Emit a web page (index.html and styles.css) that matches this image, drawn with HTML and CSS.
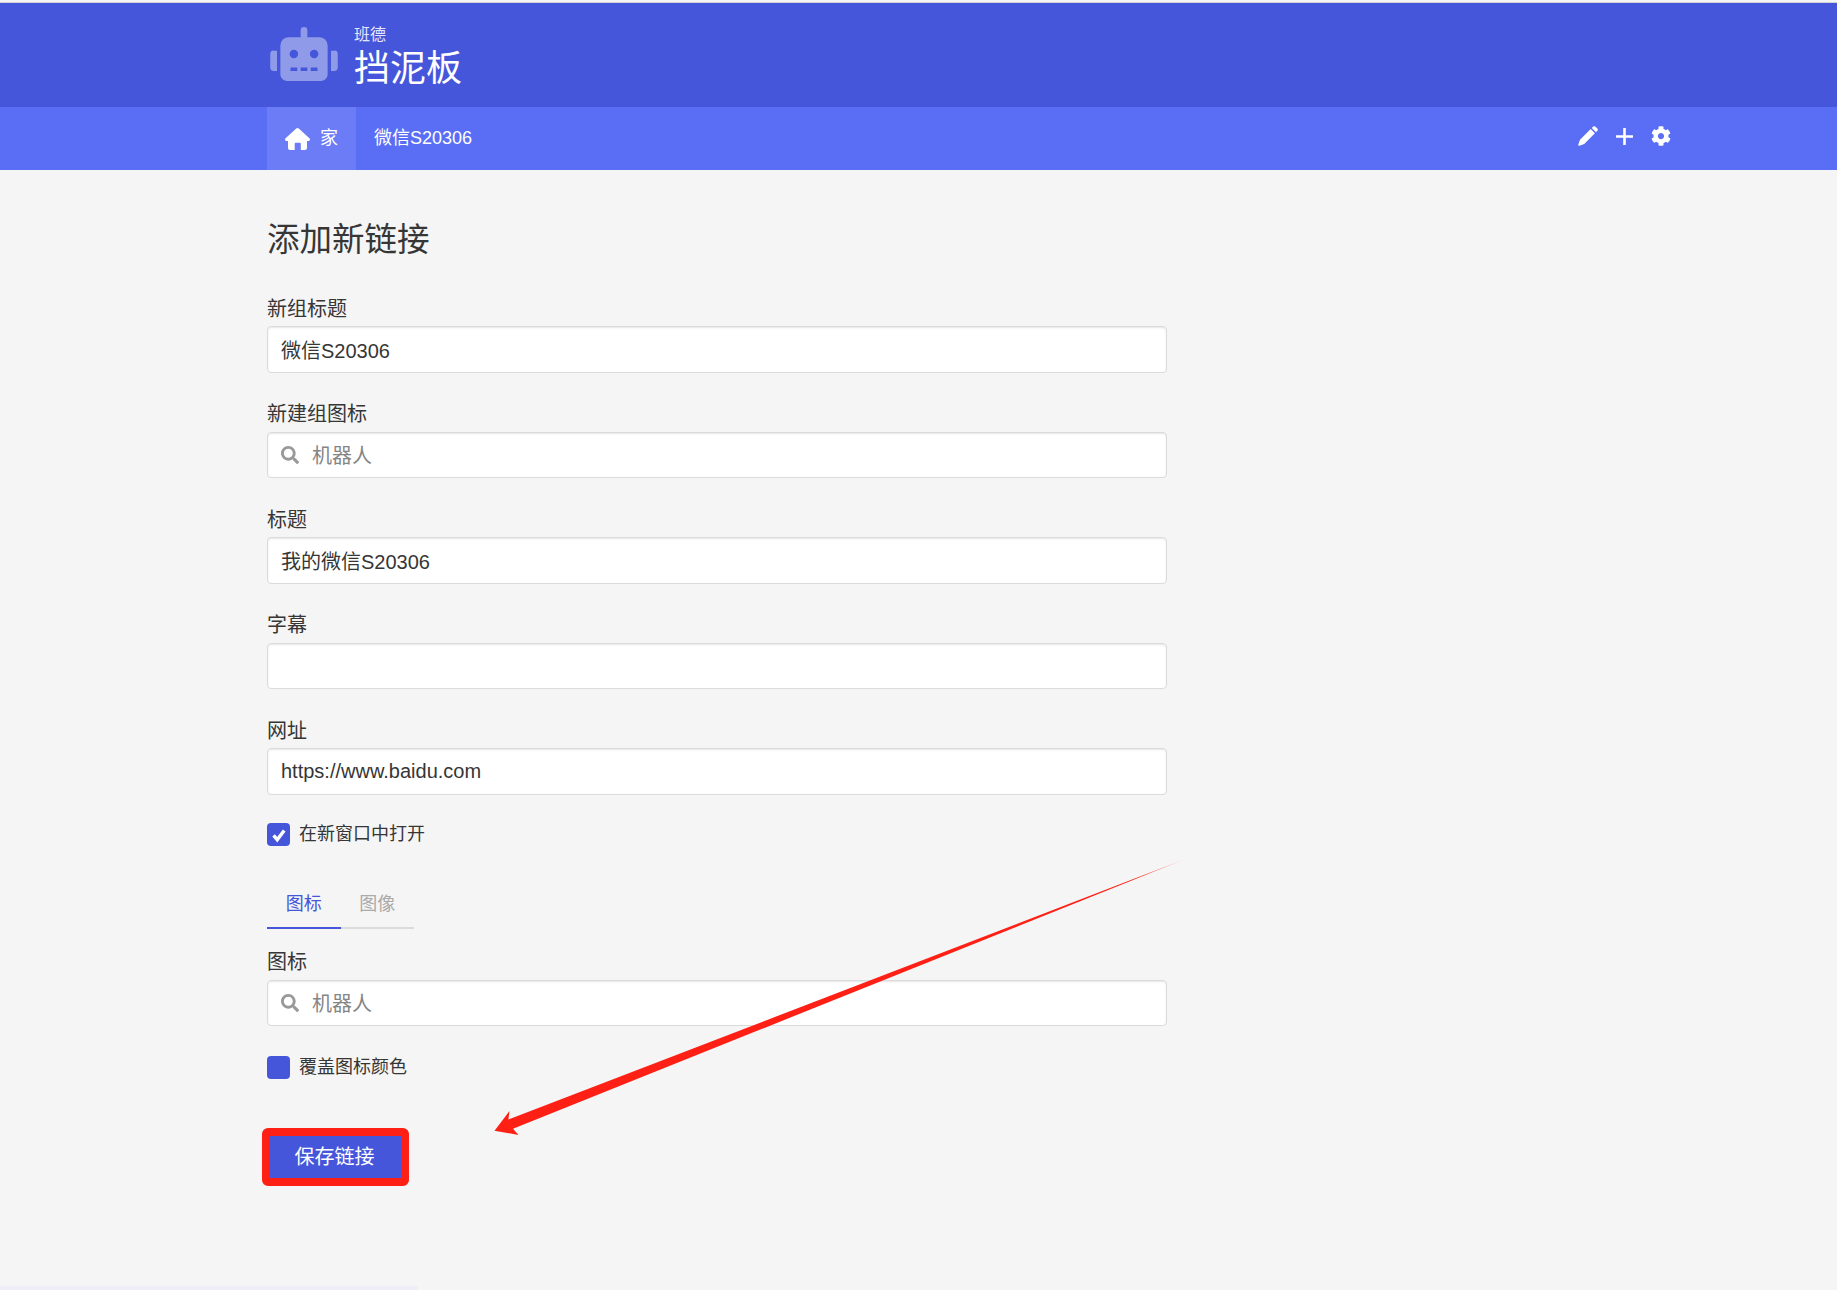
FILE: index.html
```html
<!DOCTYPE html>
<html lang="zh-CN">
<head>
<meta charset="utf-8">
<title>挡泥板</title>
<link rel="stylesheet" href="styles.css">
</head>
<body>
<header class="banner">
  <svg class="robot" viewBox="0 0 640 512"><path d="M32,224H64V416H32A31.96166,31.96166,0,0,1,0,384V256A31.96166,31.96166,0,0,1,32,224Zm512-48V448a64.06328,64.06328,0,0,1-64,64H160a64.06328,64.06328,0,0,1-64-64V176a79.974,79.974,0,0,1,80-80H288V32a32,32,0,0,1,64,0V96H464A79.974,79.974,0,0,1,544,176ZM264,256a40,40,0,1,0-40,40A39.997,39.997,0,0,0,264,256Zm-8,128H192v32h64Zm96,0H288v32h64ZM456,256a40,40,0,1,0-40,40A39.997,39.997,0,0,0,456,256Zm-8,128H384v32h64ZM640,256V384a31.96166,31.96166,0,0,1-32,32H576V224h32A31.96166,31.96166,0,0,1,640,256Z"/></svg>
  <div class="brand">
    <div class="brand-sub">班德</div>
    <div class="brand-title">挡泥板</div>
  </div>
</header>
<nav class="navbar">
  <div class="nav-links">
    <a class="nav-item nav-home">
      <svg class="home-icon" viewBox="0 0 25 22"><path d="M12.5 0Q13.2 0 13.8.5L24.4 10.3Q25.4 11.4 24.6 12.4 24 13 23 13H22V20Q22 22 20 22H15.8V15.7Q15.8 14.7 14.8 14.7H10.7Q9.7 14.7 9.7 15.7V22H5Q3 22 3 20V13H2Q1 13 .4 12.4-.4 11.4.6 10.3L11.2.5Q11.8 0 12.5 0Z"/></svg>
      <span>家</span>
    </a>
    <a class="nav-item">微信S20306</a>
  </div>
  <div class="nav-tools">
    <svg class="tool" viewBox="0 0 20 20"><path d="M.3 18.6L2 13.8 12.7 3.1 16.9 7.3 6.2 18 1.4 19.7Q.1 19.9.3 18.6ZM13.8 2L15.2.6Q16-.1 17.2.4L19.6 2.8Q20.1 4 19.4 4.8L18 6.2Z"/></svg>
    <svg class="tool tool-plus" viewBox="0 0 17 17"><path d="M7.2 0h2.6v7.2H17v2.6H9.8V17H7.2V9.8H0V7.2h7.2z"/></svg>
    <svg class="tool" viewBox="0 0 512 512"><path d="M487.4 315.7l-42.6-24.6c4.3-23.2 4.3-47 0-70.2l42.6-24.6c4.9-2.8 7.1-8.6 5.5-14-11.1-35.6-30-67.8-54.7-94.6-3.8-4.1-10-5.1-14.8-2.3L380.8 110c-17.9-15.4-38.5-27.3-60.8-35.1V25.8c0-5.6-3.9-10.5-9.4-11.7-36.7-8.2-74.3-7.8-109.2 0-5.5 1.2-9.4 6.1-9.4 11.7V75c-22.2 7.9-42.8 19.8-60.8 35.1L88.7 85.5c-4.9-2.8-11-1.9-14.8 2.3-24.7 26.7-43.6 58.9-54.7 94.6-1.7 5.4.6 11.2 5.5 14L67.3 221c-4.3 23.2-4.3 47 0 70.2l-42.6 24.6c-4.9 2.8-7.1 8.6-5.5 14 11.1 35.6 30 67.8 54.7 94.6 3.8 4.1 10 5.1 14.8 2.3l42.6-24.6c17.9 15.4 38.5 27.3 60.8 35.1v49.2c0 5.6 3.9 10.5 9.4 11.7 36.7 8.2 74.3 7.8 109.2 0 5.5-1.2 9.4-6.1 9.4-11.7v-49.2c22.2-7.9 42.8-19.8 60.8-35.1l42.6 24.6c4.9 2.8 11 1.9 14.8-2.3 24.7-26.7 43.6-58.9 54.7-94.6 1.5-5.5-.7-11.3-5.6-14.1zM256 336c-44.1 0-80-35.9-80-80s35.9-80 80-80 80 35.9 80 80-35.9 80-80 80z"/></svg>
  </div>
</nav>
<main class="content">
  <h1 class="page-title">添加新链接</h1>
  <div class="field">
    <div class="label">新组标题</div>
    <div class="input">微信S20306</div>
  </div>
  <div class="field">
    <div class="label">新建组图标</div>
    <div class="input input-search">
      <svg class="search-icon" viewBox="0 0 512 512"><path d="M505 442.7L405.3 343c-4.5-4.5-10.6-7-17-7H372c27.6-35.3 44-79.7 44-128C416 93.1 322.9 0 208 0S0 93.1 0 208s93.1 208 208 208c48.3 0 92.7-16.4 128-44v16.3c0 6.4 2.5 12.5 7 17l99.7 99.7c9.4 9.4 24.6 9.4 33.9 0l28.3-28.3c9.4-9.4 9.4-24.6.1-34zM208 336c-70.7 0-128-57.2-128-128 0-70.7 57.2-128 128-128 70.7 0 128 57.2 128 128 0 70.7-57.2 128-128 128z"/></svg>
      <span>机器人</span>
    </div>
  </div>
  <div class="field">
    <div class="label">标题</div>
    <div class="input">我的微信S20306</div>
  </div>
  <div class="field">
    <div class="label">字幕</div>
    <div class="input"></div>
  </div>
  <div class="field">
    <div class="label">网址</div>
    <div class="input">https://www.baidu.com</div>
  </div>
  <div class="check check-tabs">
    <span class="box">
      <svg class="tick" viewBox="0 0 16 16"><path d="M2.6 8.4l3.6 4.3 7-9.2"/></svg>
    </span>
    <span>在新窗口中打开</span>
  </div>
  <div class="tabs">
    <a class="tab tab-active">图标</a>
    <a class="tab">图像</a>
  </div>
  <div class="field field-icon">
    <div class="label">图标</div>
    <div class="input input-search">
      <svg class="search-icon" viewBox="0 0 512 512"><path d="M505 442.7L405.3 343c-4.5-4.5-10.6-7-17-7H372c27.6-35.3 44-79.7 44-128C416 93.1 322.9 0 208 0S0 93.1 0 208s93.1 208 208 208c48.3 0 92.7-16.4 128-44v16.3c0 6.4 2.5 12.5 7 17l99.7 99.7c9.4 9.4 24.6 9.4 33.9 0l28.3-28.3c9.4-9.4 9.4-24.6.1-34zM208 336c-70.7 0-128-57.2-128-128 0-70.7 57.2-128 128-128 70.7 0 128 57.2 128 128 0 70.7-57.2 128-128 128z"/></svg>
      <span>机器人</span>
    </div>
  </div>
  <div class="check check-save">
    <span class="box"></span>
    <span>覆盖图标颜色</span>
  </div>
  <div class="save-mark">
    <button class="save" type="button">保存链接</button>
  </div>
</main>
<svg class="annotation" viewBox="0 0 1837 1290">
  <defs>
    <linearGradient id="fade" gradientUnits="userSpaceOnUse" x1="494" y1="1131" x2="1186" y2="859">
      <stop offset="0" stop-color="#ff2015"/>
      <stop offset="0.93" stop-color="#ff2015"/>
      <stop offset="1" stop-color="#ff2015" stop-opacity="0.3"/>
    </linearGradient>
  </defs>
  <polygon fill="url(#fade)" points="494.5,1130.7 509.5,1111 508.4,1119.5 1186,858.8 513,1128.8 518.5,1135"/>
</svg>
<div class="bottom-strip"></div>
</body>
</html>
```
FILE: styles.css
```css
* { box-sizing: border-box; }
html, body { margin: 0; height: 1290px; overflow: hidden; }
body {
  position: relative;
  padding-top: 2px;
  background: #f5f5f5;
  color: #363636;
  font-family: "Liberation Sans", "Noto Sans CJK SC", sans-serif;
}
.banner {
  display: flex;
  align-items: center;
  gap: 16px;
  height: 105px;
  padding: 0 0 0 270px;
  border-top: 1px solid #d4d4d4;
  background: #4656db;
}
.robot { width: 68px; height: 54px; margin-top: -3px; fill: #8f9ae9; }
.brand { margin-top: 6px; color: #fff; }
.brand-sub { font-size: 16px; line-height: 20px; color: #e4e7fa; }
.brand-title { font-size: 36px; line-height: 47px; }
.navbar {
  display: flex;
  justify-content: space-between;
  align-items: stretch;
  height: 63px;
  padding: 0 166px 0 267px;
  background: #5a6ef5;
  color: #fff;
}
.nav-links { display: flex; }
.nav-item {
  display: flex;
  align-items: center;
  gap: 10px;
  padding: 0 18px 6px;
  font-size: 18px;
}
.nav-home { background: #6b7cf6; }
.home-icon { width: 25px; height: 22px; margin-top: 6px; fill: #fff; }
.nav-tools { display: flex; align-items: center; gap: 18px; margin-bottom: 5px; }
.tool { width: 20px; height: 20px; fill: #fff; }
.tool-plus { width: 17px; height: 17px; }
.content { width: 1167px; padding: 48px 0 0 267px; }
.page-title { margin: 2px 0 36.5px; font-size: 32.5px; line-height: 40px; font-weight: 400; }
.field { margin-bottom: 29.5px; }
.label { margin-bottom: 5.5px; font-size: 20px; line-height: 24px; }
.field-icon { margin-bottom: 30px; }
.input {
  display: flex;
  align-items: center;
  height: 46.5px;
  padding: 0 13px;
  border: 1px solid #dbdbdb;
  border-radius: 4px;
  background: #fff;
  box-shadow: inset 0 1px 2px rgba(10, 10, 10, 0.1);
  font-size: 20px;
}
.input-search { gap: 13px; color: #858585; }
.search-icon { width: 18px; height: 18px; fill: #999; }
.check {
  display: flex;
  align-items: center;
  gap: 9px;
  font-size: 18px;
  line-height: 23px;
}
.check-tabs { margin-top: -1px; margin-bottom: 44px; }
.check-save { margin-bottom: 49px; }
.box {
  display: flex;
  align-items: center;
  justify-content: center;
  width: 23px;
  height: 23px;
  border-radius: 4px;
  background: #4656db;
}
.tick { width: 16px; height: 16px; fill: none; stroke: #fff; stroke-width: 3.4; }
.tabs {
  display: flex;
  width: 147px;
  margin-bottom: 21px;
  border-bottom: 2px solid #dbdbdb;
}
.tab {
  width: 73.5px;
  margin-bottom: -2px;
  padding-bottom: 9px;
  border-bottom: 2px solid transparent;
  color: #aaa;
  font-size: 18px;
  line-height: 28px;
  text-align: center;
}
.tab-active { color: #4656db; border-bottom-color: #4656db; }
.save-mark {
  display: flex;
  width: 147px;
  height: 58px;
  margin-left: -5px;
  border: 8px solid #ff2015;
  border-radius: 6px;
}
.save {
  flex: 1;
  padding: 0 2px 3px 0;
  border: 0;
  background: #4656db;
  color: #fff;
  font: inherit;
  font-size: 20px;
}
.annotation {
  position: absolute;
  left: 0;
  top: 0;
  width: 1837px;
  height: 1290px;
  pointer-events: none;
}
.bottom-strip {
  position: absolute;
  left: 0;
  bottom: 0;
  width: 418px;
  height: 4px;
  background: #eeeef8;
}
```
